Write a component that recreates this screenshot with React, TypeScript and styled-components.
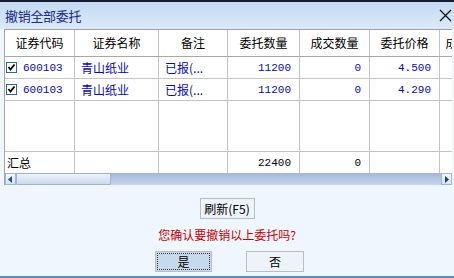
import styled, { createGlobalStyle } from "styled-components";

const GlobalStyle = createGlobalStyle`
  html, body {
    margin: 0;
    padding: 0;
    background: #eff6fd;
  }
  body {
    font-family: "Noto Sans CJK SC", "Liberation Sans", sans-serif;
    font-size: 12px;
  }
`;

const COLS = "70px 84px 69px 72px 70px 70px 60px";

// window frame
const Window = styled.div`
  width: 454px;
  height: 278px;
  box-sizing: border-box;
  display: flex;
  flex-direction: column;
  background: #eff6fd;
  border-top: 2px solid #121a2c;
  border-bottom: 2px solid #5f8abd;
  overflow: hidden;
`;

const TitleBar = styled.div`
  height: 27px;
  display: flex;
  align-items: center;
  justify-content: space-between;
  padding: 0 2px 0 5px;
  background: linear-gradient(#c3daf3, #dce9f8);
`;

const Title = styled.span`
  font-size: 13px;
  line-height: 13px;
  color: #1a2a88;
  letter-spacing: -0.3px;
`;

const Grid = styled.div`
  margin-left: 4px;
  width: 448px;
  overflow: hidden;
  background: #fff;
  border-left: 1px solid #a4a4a4;
  border-top: 1px solid #a0a0a0;
  box-sizing: border-box;
`;

const Row = styled.div<{ $h: number; $line?: boolean }>`
  display: grid;
  grid-template-columns: ${COLS};
  height: ${({ $h }) => $h}px;
  box-sizing: border-box;
  border-bottom: ${({ $line }) => ($line ? "1px solid #c4c4c4" : "none")};
`;

const HeadRow = styled(Row)`
  border-bottom: 1px solid #a8a8a8;
`;

const Cell = styled.div<{ $align?: "left" | "right" | "center"; $color?: string }>`
  border-right: 1px solid #c4c4c4;
  display: flex;
  align-items: center;
  justify-content: ${({ $align }) =>
    $align === "right" ? "flex-end" : $align === "center" ? "center" : "flex-start"};
  padding: ${({ $align }) => ($align === "right" ? "0 8px 0 0" : $align === "center" ? "0" : "0 0 0 6px")};
  color: ${({ $color }) => $color || "#000"};
  white-space: nowrap;
  overflow: hidden;
  line-height: 14px;
  gap: 6px;
`;

const Num = styled.span`
  font-family: "Liberation Mono", monospace;
  font-size: 11px;
`;

const ScrollBar = styled.div`
  height: 12px;
  display: flex;
  background: linear-gradient(#a3b7d8, #c6d4eb);
`;

const ArrowBtn = styled.div`
  width: 11px;
  box-sizing: border-box;
  display: flex;
  align-items: center;
  justify-content: center;
  background: linear-gradient(#f4f8fd, #d6e3f3);
  border: 1px solid #9fb6d8;
`;

const Thumb = styled.div`
  width: 95px;
  box-sizing: border-box;
  background: linear-gradient(#edf3fb, #cbdaef);
  border: 1px solid #9ab3da;
  border-radius: 1px;
`;

const Track = styled.div`
  flex: 1;
`;

const Footer = styled.div`
  display: flex;
  flex-direction: column;
  align-items: center;
  padding-top: 13px;
`;

const Button = styled.button<{ $w: number; $focus?: boolean }>`
  width: ${({ $w }) => $w}px;
  height: 21px;
  padding: 0;
  font-family: "Noto Sans CJK SC", sans-serif;
  font-size: 12px;
  line-height: 12px;
  color: #000;
  background: ${({ $focus }) => ($focus ? "#c8d9ee" : "#edf3f8")};
  border: 1px solid #b6bec9;
  outline: ${({ $focus }) => ($focus ? "1px dotted #333" : "none")};
  outline-offset: -3px;
`;

const Question = styled.div`
  margin: 9px 0 9px;
  color: #c40000;
  font-size: 12px;
  line-height: 14px;
`;

const ButtonRow = styled.div`
  display: flex;
  gap: 34px;
  margin-left: 5px;
`;

const CheckBox = () => (
  <svg width="11" height="11" viewBox="0 0 11 11">
    <rect x="0.5" y="0.5" width="10" height="10" fill="#fff" stroke="#2b6d8f" />
    <polyline points="2.5,5 4.5,7.5 8.5,2.5" fill="none" stroke="#000" strokeWidth="1.8" />
  </svg>
);

const CloseIcon = () => (
  <svg width="13" height="13" viewBox="0 0 13 13">
    <path d="M1 1 L12 12 M12 1 L1 12" stroke="#111" strokeWidth="1.3" />
  </svg>
);

const rows = [
  { code: "600103", name: "青山纸业", note: "已报(...", qty: "11200", deal: "0", price: "4.500" },
  { code: "600103", name: "青山纸业", note: "已报(...", qty: "11200", deal: "0", price: "4.290" },
];

const headers = ["证券代码", "证券名称", "备注", "委托数量", "成交数量", "委托价格", "成交价格"];

const blue = "#0a0aa8";

export default function App() {
  return (
    <>
      <GlobalStyle />
      <Window>
        <TitleBar>
          <Title>撤销全部委托</Title>
          <CloseIcon />
        </TitleBar>
        <Grid>
          <HeadRow $h={27}>
            {headers.map((h) => (
              <Cell key={h} $align="center">
                {h}
              </Cell>
            ))}
          </HeadRow>
          {rows.map((r, i) => (
            <Row key={i} $h={22} $line>
              <Cell $color={blue} style={{ paddingLeft: 1 }}>
                <CheckBox />
                <Num>{r.code}</Num>
              </Cell>
              <Cell $color={blue}>{r.name}</Cell>
              <Cell $color={blue}>{r.note}</Cell>
              <Cell $align="right" $color={blue}>
                <Num>{r.qty}</Num>
              </Cell>
              <Cell $align="right" $color={blue}>
                <Num>{r.deal}</Num>
              </Cell>
              <Cell $align="right" $color={blue}>
                <Num>{r.price}</Num>
              </Cell>
              <Cell />
            </Row>
          ))}
          <Row $h={51} $line>
            {headers.map((h) => (
              <Cell key={h} />
            ))}
          </Row>
          <Row $h={21}>
            <Cell style={{ paddingLeft: 2 }}>汇总</Cell>
            <Cell />
            <Cell />
            <Cell $align="right">
              <Num>22400</Num>
            </Cell>
            <Cell $align="right">
              <Num>0</Num>
            </Cell>
            <Cell />
            <Cell />
          </Row>
          <ScrollBar>
            <ArrowBtn>
              <svg width="5" height="7" viewBox="0 0 5 7">
                <polygon points="4,0 4,7 0,3.5" fill="#1f4fa0" />
              </svg>
            </ArrowBtn>
            <Thumb />
            <Track />
            <ArrowBtn>
              <svg width="5" height="7" viewBox="0 0 5 7">
                <polygon points="1,0 1,7 5,3.5" fill="#1f3f80" />
              </svg>
            </ArrowBtn>
          </ScrollBar>
        </Grid>
        <Footer>
          <Button $w={55}>刷新(F5)</Button>
          <Question>您确认要撤销以上委托吗?</Question>
          <ButtonRow>
            <Button $w={57} $focus>
              是
            </Button>
            <Button $w={58}>否</Button>
          </ButtonRow>
        </Footer>
      </Window>
    </>
  );
}
